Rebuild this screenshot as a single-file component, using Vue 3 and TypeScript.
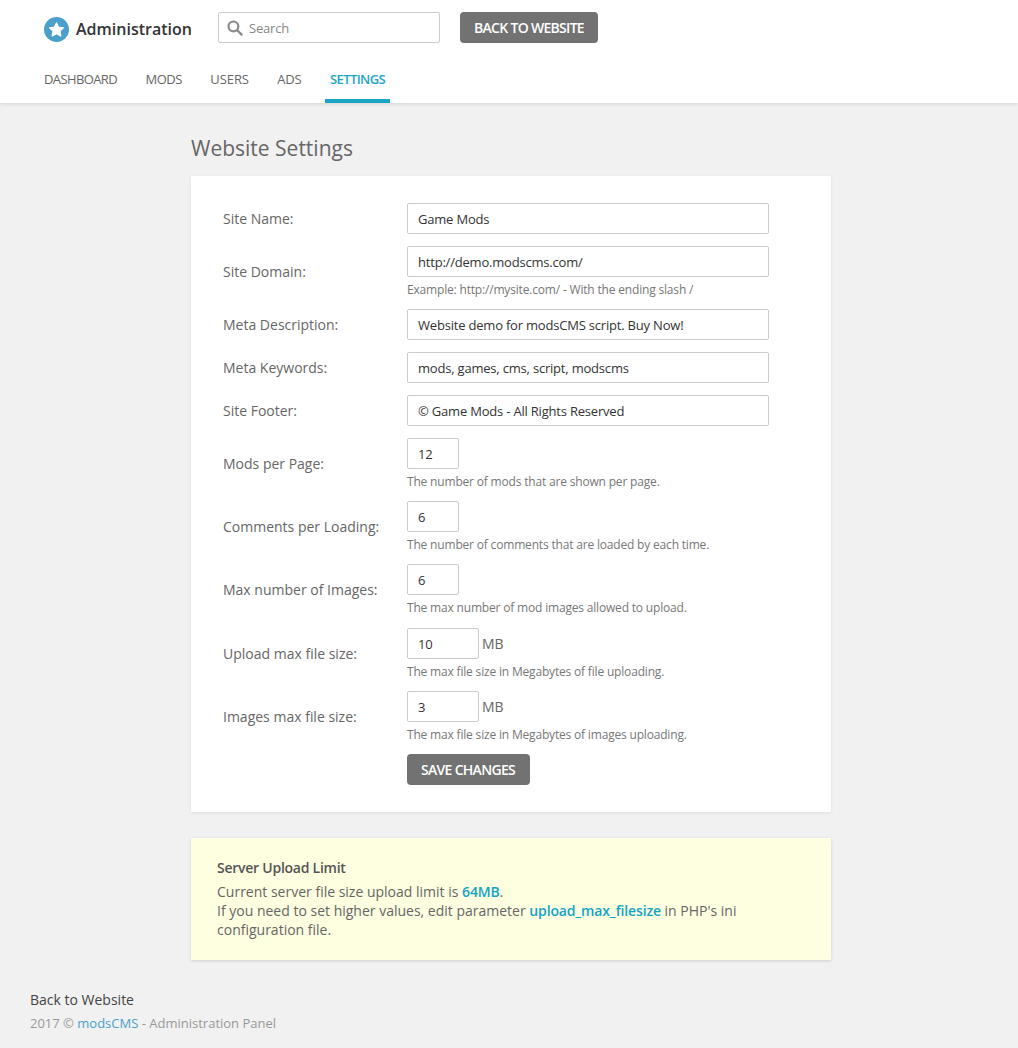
<script setup lang="ts">
interface Field {
  label: string;
  value: string;
  size: "full" | "small" | "medium";
  hint?: string;
  unit?: string;
}

const navItems = ["DASHBOARD", "MODS", "USERS", "ADS", "SETTINGS"];

const fields: Field[] = [
  { label: "Site Name:", value: "Game Mods", size: "full" },
  { label: "Site Domain:", value: "http://demo.modscms.com/", size: "full", hint: "Example: http://mysite.com/ - With the ending slash /" },
  { label: "Meta Description:", value: "Website demo for modsCMS script. Buy Now!", size: "full" },
  { label: "Meta Keywords:", value: "mods, games, cms, script, modscms", size: "full" },
  { label: "Site Footer:", value: "© Game Mods - All Rights Reserved", size: "full" },
  { label: "Mods per Page:", value: "12", size: "small", hint: "The number of mods that are shown per page." },
  { label: "Comments per Loading:", value: "6", size: "small", hint: "The number of comments that are loaded by each time." },
  { label: "Max number of Images:", value: "6", size: "small", hint: "The max number of mod images allowed to upload." },
  { label: "Upload max file size:", value: "10", size: "medium", unit: "MB", hint: "The max file size in Megabytes of file uploading." },
  { label: "Images max file size:", value: "3", size: "medium", unit: "MB", hint: "The max file size in Megabytes of images uploading." },
];
</script>

<template>
  <div class="page">
    <header class="header">
      <div class="top">
        <div class="brand">
          <svg class="logo" width="25" height="25" viewBox="0 0 25 25">
            <circle cx="12.5" cy="12.5" r="12.5" fill="#4a9fcb" />
            <path d="M12.5 5.6l2.2 4.5 5 .7-3.6 3.5.9 5-4.5-2.4L8 19.3l.9-5-3.6-3.5 5-.7z" fill="#fff" stroke="#fff" stroke-width="1" stroke-linejoin="round" />
          </svg>
          <span class="brand-name">Administration</span>
        </div>
        <div class="search">
          <svg width="16" height="16" viewBox="0 0 16 16" fill="none" stroke="#8a8a8a" stroke-width="2.2">
            <circle cx="6.4" cy="6.4" r="4.9" />
            <path d="M10 10l4.6 4.6" stroke-linecap="round" />
          </svg>
          <span>Search</span>
        </div>
        <a class="btn">BACK TO WEBSITE</a>
      </div>
      <nav class="nav">
        <a v-for="item in navItems" :key="item" :class="{ active: item === 'SETTINGS' }">{{ item }}</a>
      </nav>
    </header>

    <main class="main">
      <h1>Website Settings</h1>
      <section class="card">
        <div v-for="field in fields" :key="field.label" class="row">
          <label>{{ field.label }}</label>
          <div class="control">
            <div class="input-line">
              <input type="text" :class="field.size" :value="field.value" />
              <span v-if="field.unit" class="unit">{{ field.unit }}</span>
            </div>
            <div v-if="field.hint" class="hint">{{ field.hint }}</div>
          </div>
        </div>
        <div class="actions">
          <a class="btn">SAVE CHANGES</a>
        </div>
      </section>

      <section class="notice">
        <h2>Server Upload Limit</h2>
        <p>
          Current server file size upload limit is <b>64MB</b>.<br />
          If you need to set higher values, edit parameter <b>upload_max_filesize</b> in PHP's ini configuration file.
        </p>
      </section>
    </main>

    <footer class="footer">
      <a class="back">Back to Website</a>
      <div class="copy">2017 © <span>modsCMS</span> - Administration Panel</div>
    </footer>
  </div>
</template>

<style>
body {
  background: #f1f1f1;
}
</style>

<style scoped>
.page {
  font-family: "Open Sans", "Liberation Sans", sans-serif;
  font-size: 14px;
  color: #666;
  min-height: 1048px;
  background: #f1f1f1;
}

.header {
  background: #fff;
  height: 103px;
  box-shadow: 0 1px 4px rgba(0, 0, 0, 0.12);
  box-sizing: border-box;
  padding: 12px 0 0 39px;
}

.top {
  display: flex;
  align-items: center;
}

.brand {
  display: flex;
  align-items: center;
  width: 179px;
  padding-left: 5px;
  box-sizing: border-box;
  margin-top: 3px;
}

.brand-name {
  margin-left: 7px;
  font-size: 16px;
  font-weight: 600;
  color: #333;
}

.search {
  width: 222px;
  height: 31px;
  box-sizing: border-box;
  border: 1px solid #ccc;
  border-radius: 2px;
  display: flex;
  align-items: center;
  padding-left: 8px;
  gap: 6px;
  color: #888;
  font-size: 13px;
  letter-spacing: -0.2px;
}

.btn {
  display: inline-block;
  background: #727272;
  color: #fff;
  font-size: 14px;
  font-weight: 600;
  line-height: 31px;
  height: 31px;
  padding: 0 14.5px 0 14px;
  border-radius: 4px;
  letter-spacing: -0.7px;
}

.top .btn {
  margin-left: 20px;
}

.nav {
  display: flex;
  gap: 18.5px;
  margin-top: 19px;
}

.nav a {
  padding: 0 5px;
  height: 41px;
  box-sizing: border-box;
  line-height: 34px;
  font-size: 13px;
  color: #666;
  letter-spacing: -0.5px;
}

.nav a:nth-child(1) {
  letter-spacing: -0.62px;
}

.nav a:nth-child(3) {
  letter-spacing: -0.1px;
}

.nav a:nth-child(4) {
  letter-spacing: -0.2px;
}

.nav a.active {
  color: #1ba5c5;
  font-weight: 600;
  border-bottom: 4px solid #1ba5c5;
  letter-spacing: -0.6px;
}

.main {
  width: 640px;
  margin: 0 0 0 191px;
}

h1 {
  margin: 0;
  padding-top: 30px;
  font-size: 21px;
  line-height: 30px;
  font-weight: 400;
  color: #666;
  height: 43px;
}

.card {
  background: #fff;
  box-shadow: 0 1px 3px rgba(0, 0, 0, 0.08);
  padding: 27px 32px 27px;
  height: 636px;
  box-sizing: border-box;
}

.row {
  display: flex;
  align-items: center;
  margin-bottom: 12px;
}

.row:nth-child(9) {
  margin-top: 13px;
}

.row label {
  width: 184px;
  flex: none;
  color: #666;
}

.input-line {
  display: flex;
  align-items: center;
}

input {
  height: 31px;
  box-sizing: border-box;
  border: 1px solid #ccc;
  border-radius: 2px;
  padding: 0 10px;
  font-family: inherit;
  font-size: 13px;
  letter-spacing: -0.2px;
  color: #333;
  outline: none;
  background: #fff;
}

input.full {
  width: 362px;
}

input.small {
  width: 52px;
}

input.medium {
  width: 72px;
}

.unit {
  margin-left: 3px;
  font-size: 14px;
  color: #666;
}

.hint {
  height: 20px;
  line-height: 25px;
  font-size: 12px;
  letter-spacing: -0.18px;
  color: #777;
}

.actions {
  padding-left: 184px;
}

.notice {
  margin-top: 26px;
  height: 122px;
  box-sizing: border-box;
  background: #fefee0;
  box-shadow: 0 1px 3px rgba(0, 0, 0, 0.15);
  padding: 20px 25px 0 26px;
  line-height: 19px;
}

.notice h2 {
  margin: 0 0 5px;
  font-size: 14px;
  font-weight: 600;
  line-height: 19px;
  letter-spacing: -0.25px;
  color: #555;
}

.notice p {
  margin: 0;
}

.notice b {
  font-weight: 600;
  letter-spacing: -0.15px;
  color: #12a5c5;
}

.footer {
  padding: 30px 0 0 30px;
}

.back {
  display: block;
  font-size: 14px;
  line-height: 20px;
  color: #444;
}

.copy {
  margin-top: 5px;
  font-size: 13px;
  line-height: 17px;
  color: #999;
}

.copy span {
  color: #4a9fcb;
}
</style>
